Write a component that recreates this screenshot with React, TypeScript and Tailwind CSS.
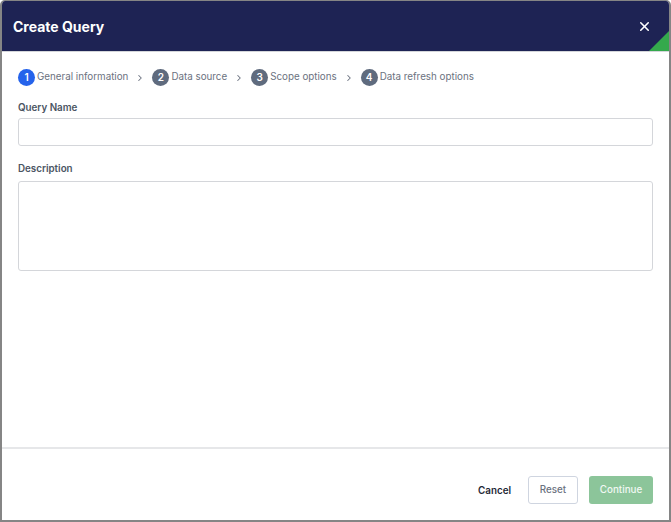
import { X, ChevronRight } from "lucide-react";

const steps = [
  { n: 1, label: "General information", active: true },
  { n: 2, label: "Data source", active: false },
  { n: 3, label: "Scope options", active: false },
  { n: 4, label: "Data refresh options", active: false },
];

export default function App() {
  return (
    <div
      className="w-[671px] h-[522px] bg-white"
      style={{ fontFamily: "Inter, 'Noto Sans', sans-serif" }}
    >
      <div className="flex h-full flex-col rounded-t-[5px] border-x-2 border-b-2 border-t border-[#858585] overflow-hidden">
        {/* header */}
        <div className="relative flex h-[50px] shrink-0 items-center justify-between bg-[#1e2354] pl-[11px] pr-[17px] pt-[1px]">
          <h1 className="text-[14px] font-bold text-white">Create Query</h1>
          <X className="h-[15px] w-[15px] text-white" strokeWidth={2.5} />
          <svg className="absolute bottom-0 right-0" width="20" height="20" viewBox="0 0 20 20">
            <polygon points="20,0 20,20 0,20" fill="#34a94c" />
          </svg>
        </div>
        <div className="h-px bg-[#d4d6da]" />

        {/* body */}
        <div className="flex flex-1 flex-col px-[16px] pt-[17px]">
          <div className="flex items-center text-[9.8px] text-[#6b7280]">
            {steps.map((s, i) => (
              <div key={s.n} className="flex items-center">
                <span
                  className={
                    "flex h-[17px] w-[17px] items-center justify-center rounded-full text-[10px] font-semibold text-white " +
                    (s.active ? "bg-[#2563eb]" : "bg-[#5f6b7e]")
                  }
                >
                  {s.n}
                </span>
                <span className="ml-[2px]">{s.label}</span>
                {i < steps.length - 1 && (
                  <ChevronRight className="ml-[7px] mr-[7px] h-[10px] w-[10px] text-[#6b7280]" strokeWidth={2.5} />
                )}
              </div>
            ))}
          </div>

          <label className="mt-[14px] text-[9.8px] leading-[15px] font-semibold text-[#4b5563]">Query Name</label>
          <input className="mt-[3px] h-[28px] w-full rounded-[3px] border border-[#d4d6da] outline-none" />

          <label className="mt-[15px] text-[9.8px] leading-[15px] font-semibold text-[#4b5563]">Description</label>
          <textarea className="mt-[5px] h-[90px] w-full resize-none rounded-[3px] border border-[#d4d6da] outline-none" />
        </div>

        {/* footer */}
        <div className="h-[2px] bg-[#e6e7e9]" />
        <div className="flex h-[71px] shrink-0 items-start justify-end pt-[27px] pr-[16px]">
          <button className="mt-[8px] mr-[17px] text-[9.8px] font-semibold text-[#1f2937]">Cancel</button>
          <button className="h-[28px] w-[50px] rounded-[3px] border border-[#cfd5e0] bg-white text-[9.8px] font-medium text-[#6b7280]">
            Reset
          </button>
          <button className="ml-[11px] h-[28px] w-[64px] rounded-[3px] bg-[#8cc59a] text-[9.8px] font-medium text-[#f1f8f3]">
            Continue
          </button>
        </div>
      </div>
    </div>
  );
}
